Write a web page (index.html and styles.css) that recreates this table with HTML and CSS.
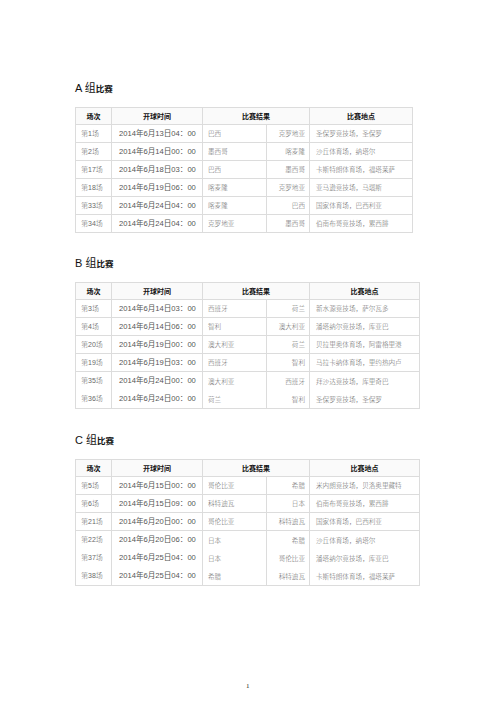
FILE: index.html
```html
<!DOCTYPE html>
<html lang="zh">
<head>
<meta charset="utf-8">
<link rel="stylesheet" href="styles.css">
</head>
<body>
<div class="page">
  <section class="group group-a">
    <h2 class="title"><span class="big">A 组</span><span class="small">比赛</span></h2>
    <table class="sched narrow">
      <colgroup><col class="c1"><col class="c2"><col class="c3a"><col class="c3b"><col class="c4"></colgroup>
      <thead><tr><th>场次</th><th>开球时间</th><th colspan="2">比赛结果</th><th>比赛地点</th></tr></thead>
      <tbody>
        <tr><td class="no">第1场</td><td class="time">2014年6月13日04：00</td><td class="home">巴西</td><td class="away">克罗地亚</td><td class="venue">圣保罗竞技场，圣保罗</td></tr>
        <tr><td class="no">第2场</td><td class="time">2014年6月14日00：00</td><td class="home">墨西哥</td><td class="away">喀麦隆</td><td class="venue">沙丘体育场，纳塔尔</td></tr>
        <tr><td class="no">第17场</td><td class="time">2014年6月18日03：00</td><td class="home">巴西</td><td class="away">墨西哥</td><td class="venue">卡斯特朗体育场，福塔莱萨</td></tr>
        <tr><td class="no">第18场</td><td class="time">2014年6月19日06：00</td><td class="home">喀麦隆</td><td class="away">克罗地亚</td><td class="venue">亚马逊竞技场，马瑙斯</td></tr>
        <tr><td class="no">第33场</td><td class="time">2014年6月24日04：00</td><td class="home">喀麦隆</td><td class="away">巴西</td><td class="venue">国家体育场，巴西利亚</td></tr>
        <tr><td class="no">第34场</td><td class="time">2014年6月24日04：00</td><td class="home">克罗地亚</td><td class="away">墨西哥</td><td class="venue">伯南布哥竞技场，累西腓</td></tr>
      </tbody>
    </table>
  </section>

  <section class="group group-b">
    <h2 class="title"><span class="big">B 组</span><span class="small">比赛</span></h2>
    <table class="sched wide">
      <colgroup><col class="c1"><col class="c2"><col class="c3a"><col class="c3b"><col class="c4w"></colgroup>
      <thead><tr><th>场次</th><th>开球时间</th><th colspan="2">比赛结果</th><th>比赛地点</th></tr></thead>
      <tbody>
        <tr><td class="no">第3场</td><td class="time">2014年6月14日03：00</td><td class="home">西班牙</td><td class="away">荷兰</td><td class="venue">新水源竞技场，萨尔瓦多</td></tr>
        <tr><td class="no">第4场</td><td class="time">2014年6月14日06：00</td><td class="home">智利</td><td class="away">澳大利亚</td><td class="venue">潘塔纳尔竞技场，库亚巴</td></tr>
        <tr><td class="no">第20场</td><td class="time">2014年6月19日00：00</td><td class="home">澳大利亚</td><td class="away">荷兰</td><td class="venue">贝拉里奥体育场，阿雷格里港</td></tr>
        <tr><td class="no">第19场</td><td class="time">2014年6月19日03：00</td><td class="home">西班牙</td><td class="away">智利</td><td class="venue">马拉卡纳体育场，里约热内卢</td></tr>
        <tr class="multi"><td class="no">第35场<br>第36场</td><td class="time">2014年6月24日00：00<br>2014年6月24日00：00</td><td class="home">澳大利亚<br>荷兰</td><td class="away">西班牙<br>智利</td><td class="venue">拜沙达竞技场，库里奇巴<br>圣保罗竞技场，圣保罗</td></tr>
      </tbody>
    </table>
  </section>

  <section class="group group-c">
    <h2 class="title"><span class="big">C 组</span><span class="small">比赛</span></h2>
    <table class="sched wide">
      <colgroup><col class="c1"><col class="c2"><col class="c3a"><col class="c3b"><col class="c4w"></colgroup>
      <thead><tr><th>场次</th><th>开球时间</th><th colspan="2">比赛结果</th><th>比赛地点</th></tr></thead>
      <tbody>
        <tr><td class="no">第5场</td><td class="time">2014年6月15日00：00</td><td class="home">哥伦比亚</td><td class="away">希腊</td><td class="venue">米内朗竞技场，贝洛奥里藏特</td></tr>
        <tr><td class="no">第6场</td><td class="time">2014年6月15日09：00</td><td class="home">科特迪瓦</td><td class="away">日本</td><td class="venue">伯南布哥竞技场，累西腓</td></tr>
        <tr><td class="no">第21场</td><td class="time">2014年6月20日00：00</td><td class="home">哥伦比亚</td><td class="away">科特迪瓦</td><td class="venue">国家体育场，巴西利亚</td></tr>
        <tr class="multi"><td class="no">第22场<br>第37场<br>第38场</td><td class="time">2014年6月20日06：00<br>2014年6月25日04：00<br>2014年6月25日04：00</td><td class="home">日本<br>日本<br>希腊</td><td class="away">希腊<br>哥伦比亚<br>科特迪瓦</td><td class="venue">沙丘体育场，纳塔尔<br>潘塔纳尔竞技场，库亚巴<br>卡斯特朗体育场，福塔莱萨</td></tr>
      </tbody>
    </table>
  </section>

  <footer class="pagenum">1</footer>
</div>
</body>
</html>
```

FILE: styles.css
```css
html, body {
  margin: 0;
  padding: 0;
  background: #ffffff;
}

.page {
  width: 496px;
  height: 702px;
  box-sizing: border-box;
  padding: 80px 0 0 75px;
  display: flex;
  flex-direction: column;
  font-family: "Liberation Sans", "Noto Sans CJK SC", sans-serif;
}

.group {
  display: flex;
  flex-direction: column;
}

.group-b { margin-top: 22px; }
.group-c { margin-top: 23px; }

.title {
  margin: 0;
  height: 16px;
  line-height: 16px;
  font-weight: normal;
  color: #111;
  display: flex;
  align-items: baseline;
}

.title .big {
  font-size: 11px;
}

.title .small {
  font-size: 8.5px;
  font-weight: bold;
}

.sched {
  margin-top: 11px;
  border-collapse: collapse;
  table-layout: fixed;
  border: 1px solid #dcdcdc;
}

.narrow { width: 337px; }
.wide { width: 344px; }

.c1 { width: 36px; }
.c2 { width: 91px; }
.c3a { width: 64px; }
.c3b { width: 43px; }
.c4 { width: 103px; }
.c4w { width: 110px; }

.sched th {
  height: 16px;
  padding: 0;
  font-size: 7px;
  font-weight: bold;
  color: #111;
  background: #fafafa;
  border: 1px solid #dcdcdc;
  text-align: center;
  line-height: 16px;
  font-family: "Noto Sans CJK SC", sans-serif;
}

.sched td {
  height: 17px;
  padding: 0 0 0 4px;
  border: 1px solid #dcdcdc;
  font-size: 6.6px;
  line-height: 17px;
  color: #6a6a6a;
  white-space: nowrap;
  overflow: hidden;
  vertical-align: middle;
  font-family: "Noto Sans CJK SC", sans-serif;
  font-weight: 300;
}

.sched td.no {
  padding-left: 5px;
  font-size: 7px;
  font-family: "Liberation Sans", "Noto Sans CJK SC", sans-serif;
}

.sched td.time {
  padding-left: 7px;
  font-size: 7.6px;
  color: #555;
  font-weight: normal;
  font-family: "Liberation Sans", "Noto Sans CJK SC", sans-serif;
}

.sched td.home {
  padding-left: 5px;
}

.sched td.away {
  text-align: right;
  padding: 0 4px 0 0;
}

.sched td.venue {
  padding-left: 6px;
}

.sched tr.multi td {
  line-height: 18px;
}

.pagenum {
  margin-top: auto;
  margin-bottom: 12px;
  margin-left: 171px;
  width: 4px;
  font-family: "Liberation Serif", "Noto Sans CJK SC", serif;
  font-size: 7px;
  color: #222;
}
```
